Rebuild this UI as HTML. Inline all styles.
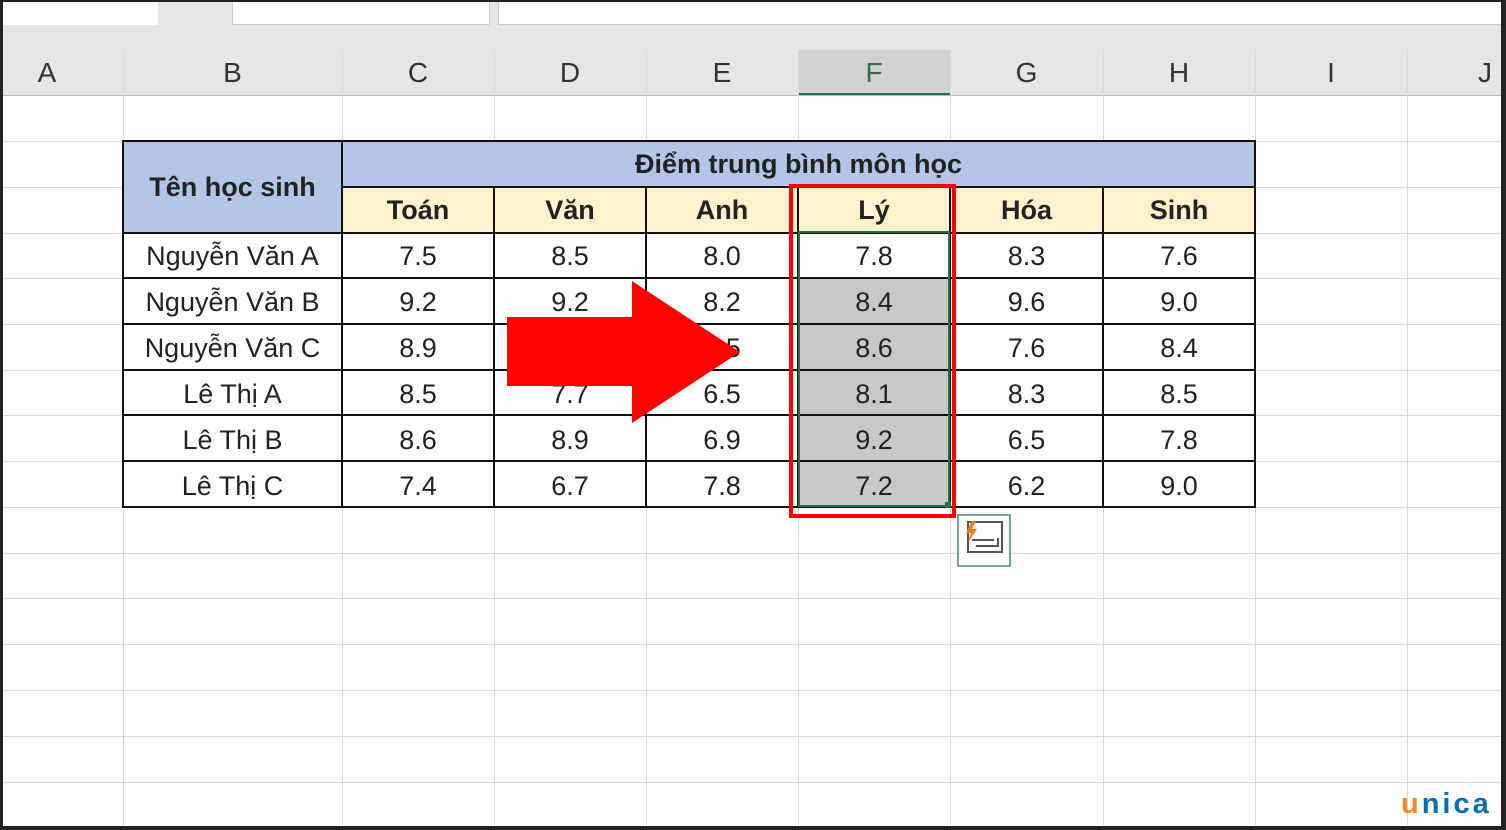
<!DOCTYPE html>
<html><head><meta charset="utf-8"><style>
*{margin:0;padding:0;box-sizing:border-box}
body{width:1506px;height:830px;background:#fff;position:relative;overflow:hidden;font-family:"Liberation Sans","DejaVu Sans",sans-serif}
.a{position:absolute}
.hl{position:absolute;height:1px;background:#dadada}
.vl{position:absolute;width:1px;background:#dadada}
.ch{position:absolute;top:50px;height:46px;font-size:28px;color:#333;text-align:center;line-height:46px}
.c{position:absolute;height:46px;line-height:46px;text-align:center;font-size:27px;color:#222}
.b{font-weight:bold}
</style></head><body>
<div class="a" style="left:0;top:0;width:1506px;height:96px;background:#e6e6e6"></div>
<div class="a" style="left:0;top:0;width:158px;height:25px;background:#fff"></div>
<div class="a" style="left:232px;top:0;width:258px;height:25px;background:#fff;border:1px solid #ccc"></div>
<div class="a" style="left:498px;top:0;width:1008px;height:25px;background:#fff;border:1px solid #ccc"></div>
<div class="a" style="left:798px;top:50px;width:152px;height:46px;background:#d2d2d2;border-bottom:3px solid #217346"></div>
<div class="a" style="left:0;top:95px;width:1506px;height:1px;background:#bbb"></div>
<div class="hl" style="left:0;top:141px;width:1506px"></div>
<div class="hl" style="left:0;top:187px;width:1506px"></div>
<div class="hl" style="left:0;top:233px;width:1506px"></div>
<div class="hl" style="left:0;top:278px;width:1506px"></div>
<div class="hl" style="left:0;top:324px;width:1506px"></div>
<div class="hl" style="left:0;top:370px;width:1506px"></div>
<div class="hl" style="left:0;top:415px;width:1506px"></div>
<div class="hl" style="left:0;top:461px;width:1506px"></div>
<div class="hl" style="left:0;top:507px;width:1506px"></div>
<div class="hl" style="left:0;top:553px;width:1506px"></div>
<div class="hl" style="left:0;top:598px;width:1506px"></div>
<div class="hl" style="left:0;top:644px;width:1506px"></div>
<div class="hl" style="left:0;top:690px;width:1506px"></div>
<div class="hl" style="left:0;top:736px;width:1506px"></div>
<div class="hl" style="left:0;top:782px;width:1506px"></div>
<div class="vl" style="left:123px;top:50px;height:780px"></div>
<div class="vl" style="left:342px;top:50px;height:780px"></div>
<div class="vl" style="left:494px;top:50px;height:780px"></div>
<div class="vl" style="left:646px;top:50px;height:780px"></div>
<div class="vl" style="left:798px;top:50px;height:780px"></div>
<div class="vl" style="left:950px;top:50px;height:780px"></div>
<div class="vl" style="left:1103px;top:50px;height:780px"></div>
<div class="vl" style="left:1255px;top:50px;height:780px"></div>
<div class="vl" style="left:1407px;top:50px;height:780px"></div>
<div class="ch" style="left:3px;width:88px">A</div>
<div class="ch" style="left:123px;width:219px">B</div>
<div class="ch" style="left:342px;width:152px">C</div>
<div class="ch" style="left:494px;width:152px">D</div>
<div class="ch" style="left:646px;width:152px">E</div>
<div class="ch" style="left:798px;width:152px;color:#3a6a50">F</div>
<div class="ch" style="left:950px;width:153px">G</div>
<div class="ch" style="left:1103px;width:152px">H</div>
<div class="ch" style="left:1255px;width:152px">I</div>
<div class="ch" style="left:1470px;width:30px">J</div>
<div class="a" style="left:123px;top:141px;width:1132px;height:46px;background:#b4c6e7"></div>
<div class="a" style="left:123px;top:187px;width:219px;height:46px;background:#b4c6e7"></div>
<div class="a" style="left:342px;top:187px;width:913px;height:46px;background:#fff2cc"></div>
<div class="a" style="left:798px;top:278px;width:152px;height:229px;background:#c8c8c8"></div>
<svg class="a" style="left:0;top:0" width="1506" height="830">
<g stroke="#111" stroke-width="2" fill="none">
<rect x="123" y="141" width="1132" height="366"/>
<line x1="342" y1="141" x2="342" y2="507"/>
<line x1="342" y1="187" x2="1255" y2="187"/>
<line x1="123" y1="233" x2="1255" y2="233"/>
<line x1="123" y1="278" x2="1255" y2="278"/>
<line x1="123" y1="324" x2="1255" y2="324"/>
<line x1="123" y1="370" x2="1255" y2="370"/>
<line x1="123" y1="415" x2="1255" y2="415"/>
<line x1="123" y1="461" x2="1255" y2="461"/>
<line x1="494" y1="187" x2="494" y2="507"/>
<line x1="646" y1="187" x2="646" y2="507"/>
<line x1="798" y1="187" x2="798" y2="507"/>
<line x1="950" y1="187" x2="950" y2="507"/>
<line x1="1103" y1="187" x2="1103" y2="507"/>
</g>
<rect x="799" y="232" width="150" height="274" fill="none" stroke="#217346" stroke-width="2"/>
<rect x="945" y="502" width="6" height="6" fill="#217346"/>
<rect x="791" y="186" width="163" height="330" fill="none" stroke="#f00" stroke-width="4"/>
<polygon points="507,317 632,317 632,281 740,352 632,423 632,386 507,386" fill="#f00"/>
<rect x="958" y="515" width="52" height="51" fill="#fff" stroke="#4a8a6a" stroke-width="1.5"/>
<rect x="968" y="522" width="34" height="30" fill="#fff" stroke="#555" stroke-width="2"/>
<path d="M972 540h22M976 546h22v-8" stroke="#555" stroke-width="2" fill="none"/>
<path d="M972 521l-6 12h5l-3 10 9-14h-5l4-8z" fill="#f08020"/>
</svg>
<div class="c b" style="left:123px;top:164px;width:219px">Tên học sinh</div>
<div class="c b" style="left:342px;top:141px;width:913px">Điểm trung bình môn học</div>
<div class="c b" style="left:342px;top:187px;width:152px">Toán</div>
<div class="c b" style="left:494px;top:187px;width:152px">Văn</div>
<div class="c b" style="left:646px;top:187px;width:152px">Anh</div>
<div class="c b" style="left:798px;top:187px;width:152px">Lý</div>
<div class="c b" style="left:950px;top:187px;width:153px">Hóa</div>
<div class="c b" style="left:1103px;top:187px;width:152px">Sinh</div>
<div class="c" style="left:123px;top:233px;width:219px">Nguyễn Văn A</div>
<div class="c" style="left:123px;top:279px;width:219px">Nguyễn Văn B</div>
<div class="c" style="left:123px;top:325px;width:219px">Nguyễn Văn C</div>
<div class="c" style="left:123px;top:371px;width:219px">Lê Thị A</div>
<div class="c" style="left:123px;top:417px;width:219px">Lê Thị B</div>
<div class="c" style="left:123px;top:463px;width:219px">Lê Thị C</div>
<div class="c" style="left:342px;top:233px;width:152px">7.5</div><div class="c" style="left:494px;top:233px;width:152px">8.5</div><div class="c" style="left:646px;top:233px;width:152px">8.0</div><div class="c" style="left:798px;top:233px;width:152px">7.8</div><div class="c" style="left:950px;top:233px;width:153px">8.3</div><div class="c" style="left:1103px;top:233px;width:152px">7.6</div>
<div class="c" style="left:342px;top:279px;width:152px">9.2</div><div class="c" style="left:494px;top:279px;width:152px">9.2</div><div class="c" style="left:646px;top:279px;width:152px">8.2</div><div class="c" style="left:798px;top:279px;width:152px">8.4</div><div class="c" style="left:950px;top:279px;width:153px">9.6</div><div class="c" style="left:1103px;top:279px;width:152px">9.0</div>
<div class="c" style="left:342px;top:325px;width:152px">8.9</div><div class="c" style="left:646px;top:325px;width:152px;z-index:-1">7.5</div><div class="c" style="left:798px;top:325px;width:152px">8.6</div><div class="c" style="left:950px;top:325px;width:153px">7.6</div><div class="c" style="left:1103px;top:325px;width:152px">8.4</div>
<div class="c" style="left:342px;top:371px;width:152px">8.5</div><div class="c" style="left:494px;top:371px;width:152px;z-index:-1">7.7</div><div class="c" style="left:646px;top:371px;width:152px">6.5</div><div class="c" style="left:798px;top:371px;width:152px">8.1</div><div class="c" style="left:950px;top:371px;width:153px">8.3</div><div class="c" style="left:1103px;top:371px;width:152px">8.5</div>
<div class="c" style="left:342px;top:417px;width:152px">8.6</div><div class="c" style="left:494px;top:417px;width:152px">8.9</div><div class="c" style="left:646px;top:417px;width:152px">6.9</div><div class="c" style="left:798px;top:417px;width:152px">9.2</div><div class="c" style="left:950px;top:417px;width:153px">6.5</div><div class="c" style="left:1103px;top:417px;width:152px">7.8</div>
<div class="c" style="left:342px;top:463px;width:152px">7.4</div><div class="c" style="left:494px;top:463px;width:152px">6.7</div><div class="c" style="left:646px;top:463px;width:152px">7.8</div><div class="c" style="left:798px;top:463px;width:152px">7.2</div><div class="c" style="left:950px;top:463px;width:153px">6.2</div><div class="c" style="left:1103px;top:463px;width:152px">9.0</div>
<div class="a" style="left:1401px;top:788px;font-size:29px;font-weight:bold;letter-spacing:3px;color:#0a6eb4"><span style="color:#f08a24">u</span>nica</div>
<div class="a" style="left:0;top:0;width:1506px;height:830px;border:3px solid #222;border-top-width:2px;border-right-width:5px;border-bottom-width:4px"></div>
</body></html>
